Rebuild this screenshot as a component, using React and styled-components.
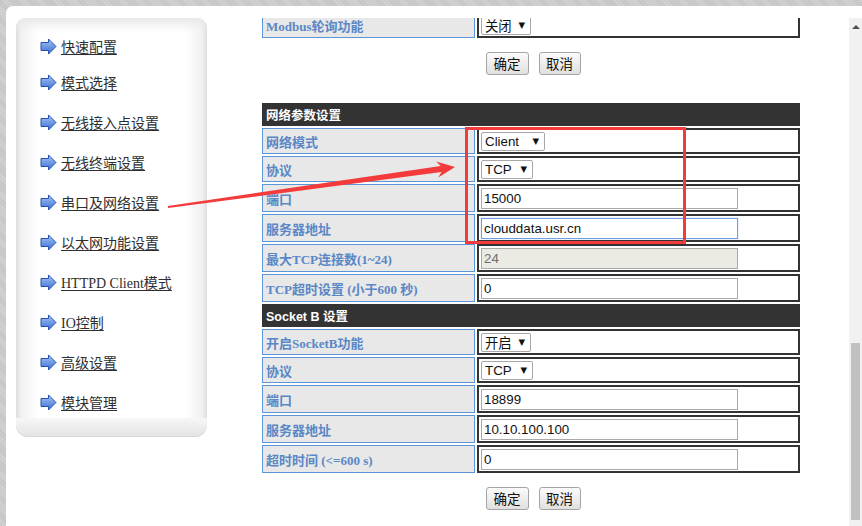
import React from "react";
import styled, { createGlobalStyle } from "styled-components";

const GlobalStyle = createGlobalStyle`
  html, body { margin: 0; padding: 0; }
  body {
    width: 862px;
    height: 526px;
    overflow: hidden;
    background-color: #cacaca;
    background-image: repeating-linear-gradient(45deg, #d4d4d4 0 1px, #c3c3c3 1px 2px);
    font-family: "Liberation Sans", "Noto Sans CJK SC", sans-serif;
  }
`;

const Page = styled.div`
  position: relative;
  width: 862px;
  height: 526px;
  padding: 6px 0 0 6px;
  box-sizing: border-box;
`;

const Panel = styled.div`
  height: 520px;
  background: #fff;
  border-top-left-radius: 7px;
  display: flex;
  padding-top: 12px;
  box-sizing: border-box;
  overflow: hidden;
`;

const Sidebar = styled.nav`
  margin-left: 10px;
  width: 191px;
  height: 419px;
  flex-shrink: 0;
  display: flex;
  flex-direction: column;
`;

const SideBody = styled.div`
  flex: 1;
  border-radius: 9px 9px 0 0;
  background:
    linear-gradient(to bottom, #e9e9e9 0px, rgba(255,255,255,0) 14px),
    linear-gradient(to right, #dedede 0px, #f1f1f1 5px, #fff 22px, #fff calc(100% - 22px), #f1f1f1 calc(100% - 5px), #dedede 100%);
  padding-top: 18px;
  box-sizing: border-box;
`;

const SideFoot = styled.div`
  height: 19px;
  border-radius: 0 0 12px 12px;
  background: linear-gradient(to bottom, #f7f7f7, #e3e3e3);
  box-shadow: inset 0 -1px #d8d8d8;
`;

const Menu = styled.ul`
  list-style: none;
  margin: 0;
  padding: 0;
  display: flex;
  flex-direction: column;
  gap: 20px;
`;

const MenuItem = styled.li`
  display: flex;
  align-items: center;
  gap: 4px;
  height: 20px;
  padding-left: 24px;
  margin-bottom: ${(p) => (p.$tight ? "-4px" : "0")};
`;

const MenuLink = styled.a`
  font-family: "Liberation Serif", "Noto Sans CJK SC", serif;
  font-size: 14px;
  color: #2e2e2e;
  text-decoration: underline;
  text-underline-offset: 2px;
  white-space: nowrap;
`;

const Frame = styled.div`
  width: 642px;
  flex-shrink: 0;
  height: 100%;
  overflow: hidden;
`;

const Inner = styled.div`
  margin-top: -6px;
  padding-left: 55px;
  width: 538px;
`;

const Table = styled.div`
  display: flex;
  flex-direction: column;
  gap: 2px;
  margin-top: ${(p) => p.$mt || 0}px;
`;

const Header = styled.div`
  height: 23px;
  background: #333333;
  color: #fff;
  font-family: ${(p) =>
    p.$latin
      ? `"Liberation Sans", "Noto Sans CJK SC", sans-serif`
      : `"Noto Sans CJK SC", sans-serif`};
  font-weight: bold;
  font-size: 12.5px;
  display: flex;
  align-items: center;
  padding-left: 4px;
`;

const Row = styled.div`
  display: flex;
  gap: 2px;
  height: ${(p) => p.$h}px;
`;

const Label = styled.div`
  width: 213px;
  flex-shrink: 0;
  box-sizing: border-box;
  background: #e8e8e8;
  border: 1px solid #5b97d8;
  color: #5a87c6;
  font-family: "Liberation Serif", "Noto Sans CJK SC", serif;
  font-weight: bold;
  font-size: 13px;
  display: flex;
  align-items: center;
  padding-left: 3px;
  white-space: nowrap;
`;

const Value = styled.div`
  flex: 1;
  box-sizing: border-box;
  border: 2px solid #333;
  display: flex;
  align-items: center;
  padding-left: 2px;
`;

const SelectBox = styled.div`
  width: ${(p) => p.$w}px;
  height: 19px;
  box-sizing: border-box;
  border: 1px solid #a7a7a7;
  border-radius: 2px;
  background: #fff;
  display: flex;
  align-items: center;
  justify-content: space-between;
  padding: 0 5px 0 3px;
  font-family: "Liberation Sans", "Noto Sans CJK SC", sans-serif;
  font-size: 13.33px;
  color: #111;
`;

const Caret = styled.span`
  font-family: "DejaVu Sans", sans-serif;
  font-size: 8.5px;
  color: #111;
`;

const Input = styled.input`
  width: 257px;
  height: 21px;
  box-sizing: border-box;
  border: 1px solid ${(p) => (p.$focus ? "#6f9fdf" : "#a9a9a9")};
  box-shadow: ${(p) => (p.$focus ? "0 0 1px 0 #8fb6ec" : "none")};
  background: ${(p) => (p.disabled ? "#ebebe4" : "#fff")};
  color: ${(p) => (p.disabled ? "#6d6d6d" : "#111")};
  font-family: "Liberation Sans", sans-serif;
  font-size: 13.33px;
  padding: 0 2px;
  margin: 0;
  outline: none;
`;

const ButtonRow = styled.div`
  display: flex;
  justify-content: center;
  gap: 10px;
  padding-left: 4px;
  margin-top: ${(p) => p.$mt}px;
`;

const Button = styled.button`
  width: ${(p) => p.$w || 43}px;
  height: 23px;
  box-sizing: border-box;
  border: 1px solid #a5a5a5;
  border-radius: 3px;
  background: linear-gradient(to bottom, #fbfbfb, #e0e0e0);
  font-family: "Noto Sans CJK SC", sans-serif;
  font-size: 13.5px;
  color: #111;
  padding: 0;
  line-height: 1;
`;

const Scrollbar = styled.div`
  width: 13px;
  flex-shrink: 0;
  height: 100%;
  background: #f1f1f1;
  display: flex;
  flex-direction: column;
  align-items: center;
`;

const ScrollArrow = styled.div`
  height: 17px;
  width: 13px;
  display: flex;
  align-items: center;
  justify-content: center;
  &::before {
    content: "";
    border-left: 4px solid transparent;
    border-right: 4px solid transparent;
    border-bottom: 4px solid #505050;
  }
`;

const Track = styled.div`
  flex: 1;
  width: 100%;
  display: flex;
  flex-direction: column;
  justify-content: flex-end;
  align-items: center;
`;

const Thumb = styled.div`
  width: 9px;
  height: 177px;
  background: #c1c1c1;
  margin-bottom: 6px;
`;

const Overlay = styled.svg`
  position: absolute;
  left: 0;
  top: 0;
  pointer-events: none;
`;

const RedBox = styled.div`
  position: absolute;
  left: 465px;
  top: 127px;
  width: 221px;
  height: 117px;
  box-sizing: border-box;
  border: 3px solid #f33b3b;
  pointer-events: none;
`;

const ArrowIcon = () => (
  <svg width="17" height="17" viewBox="0 0 17 17">
    <defs>
      <linearGradient id="ag" x1="0" y1="0" x2="0" y2="1">
        <stop offset="0" stopColor="#a9c8f4" />
        <stop offset="0.5" stopColor="#6f9ae3" />
        <stop offset="1" stopColor="#3f6fcf" />
      </linearGradient>
    </defs>
    <path
      d="M1 4.5 H8.5 V1 L16 8.5 L8.5 16 V12.5 H1 Z"
      fill="url(#ag)"
      stroke="#2450b0"
      strokeWidth="1"
      strokeLinejoin="round"
    />
  </svg>
);

const menu = [
  "快速配置",
  "模式选择",
  "无线接入点设置",
  "无线终端设置",
  "串口及网络设置",
  "以太网功能设置",
  "HTTPD Client模式",
  "IO控制",
  "高级设置",
  "模块管理",
];

const Select = ({ w, children }) => (
  <SelectBox $w={w}>
    <span>{children}</span>
    <Caret>▼</Caret>
  </SelectBox>
);

export default function App() {
  return (
    <>
      <GlobalStyle />
      <Page>
        <Panel>
          <Sidebar>
            <SideBody>
              <Menu>
                {menu.map((m, i) => (
                  <MenuItem key={m} $tight={i === 0}>
                    <ArrowIcon />
                    <MenuLink href="#">{m}</MenuLink>
                  </MenuItem>
                ))}
              </Menu>
            </SideBody>
            <SideFoot />
          </Sidebar>

          <Frame>
            <Inner>
              <Table>
                <Row $h={26}>
                  <Label>Modbus轮询功能</Label>
                  <Value>
                    <Select w={50}>关闭</Select>
                  </Value>
                </Row>
              </Table>
              <ButtonRow $mt={14}>
                <Button>确定</Button>
                <Button $w={42}>取消</Button>
              </ButtonRow>

              <Table $mt={28}>
                <Header>网络参数设置</Header>
                <Row $h={26}>
                  <Label>网络模式</Label>
                  <Value>
                    <Select w={64}>Client</Select>
                  </Value>
                </Row>
                <Row $h={26}>
                  <Label>协议</Label>
                  <Value>
                    <Select w={52}>TCP</Select>
                  </Value>
                </Row>
                <Row $h={28}>
                  <Label>端口</Label>
                  <Value>
                    <Input defaultValue="15000" />
                  </Value>
                </Row>
                <Row $h={28}>
                  <Label>服务器地址</Label>
                  <Value>
                    <Input defaultValue="clouddata.usr.cn" $focus />
                  </Value>
                </Row>
                <Row $h={28}>
                  <Label>最大TCP连接数(1~24)</Label>
                  <Value>
                    <Input defaultValue="24" disabled />
                  </Value>
                </Row>
                <Row $h={28}>
                  <Label>TCP超时设置 (小于600 秒)</Label>
                  <Value>
                    <Input defaultValue="0" />
                  </Value>
                </Row>
                <Header $latin>Socket B 设置</Header>
                <Row $h={26}>
                  <Label>开启SocketB功能</Label>
                  <Value>
                    <Select w={50}>开启</Select>
                  </Value>
                </Row>
                <Row $h={26}>
                  <Label>协议</Label>
                  <Value>
                    <Select w={52}>TCP</Select>
                  </Value>
                </Row>
                <Row $h={28}>
                  <Label>端口</Label>
                  <Value>
                    <Input defaultValue="18899" />
                  </Value>
                </Row>
                <Row $h={28}>
                  <Label>服务器地址</Label>
                  <Value>
                    <Input defaultValue="10.10.100.100" />
                  </Value>
                </Row>
                <Row $h={28}>
                  <Label>超时时间 (&lt;=600 s)</Label>
                  <Value>
                    <Input defaultValue="0" />
                  </Value>
                </Row>
              </Table>
              <ButtonRow $mt={14}>
                <Button>确定</Button>
                <Button $w={42}>取消</Button>
              </ButtonRow>
            </Inner>
          </Frame>

          <Scrollbar>
            <ScrollArrow />
            <Track>
              <Thumb />
            </Track>
          </Scrollbar>
        </Panel>

        <RedBox />
        <Overlay width="862" height="526" viewBox="0 0 862 526">
          <polygon
            points="167.9,206 440.7,165.9 436.1,161.6 455,167 438.3,177.4 441.5,171.9 168.1,208"
            fill="#f33b3b"
          />
        </Overlay>
      </Page>
    </>
  );
}
